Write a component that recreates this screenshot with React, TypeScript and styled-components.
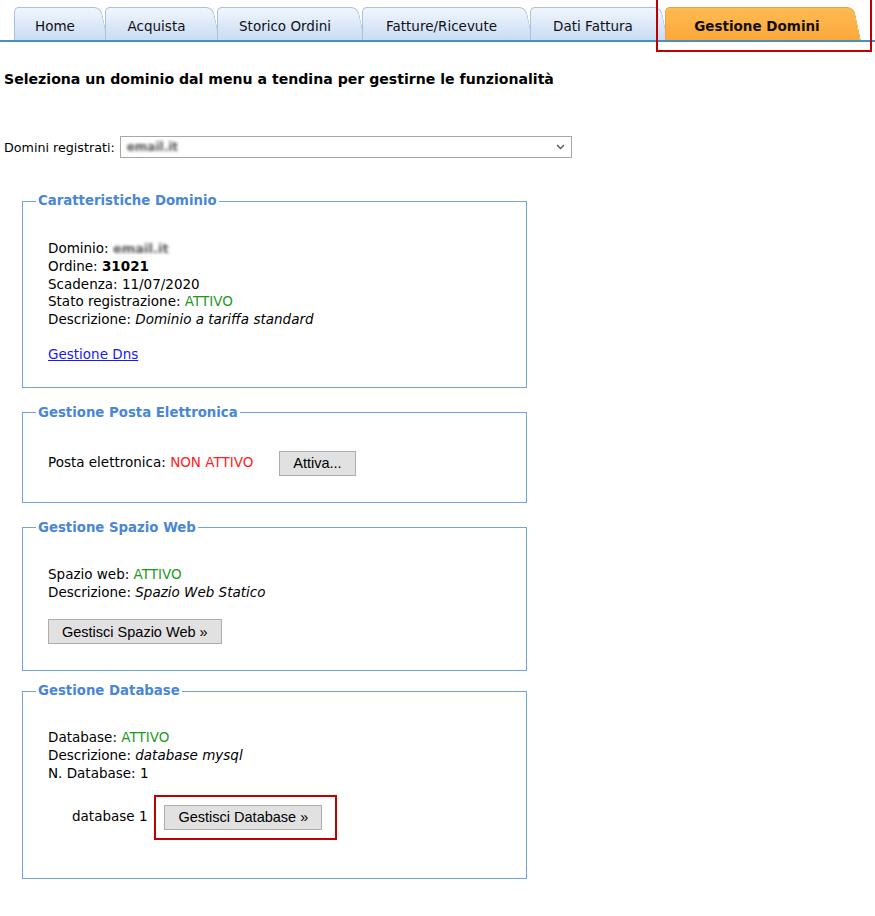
import React from 'react';
import styled, { createGlobalStyle } from 'styled-components';

const GlobalStyle = createGlobalStyle`
  body {
    margin: 0;
    background: #fff;
    color: #000;
    font-family: "DejaVu Sans", Verdana, sans-serif;
  }
`;

const Page = styled.div`
  position: relative;
  width: 875px;
  height: 916px;
  overflow: hidden;
`;

const TabBar = styled.div`
  display: flex;
  align-items: flex-end;
  height: 40px;
  padding-left: 14px;
  border-bottom: 2px solid #4690c2;
`;

const Tab = styled.div<{ $w: number; $active?: boolean }>`
  position: relative;
  z-index: 0;
  flex: none;
  width: ${p => p.$w}px;
  height: 33px;
  box-sizing: border-box;
  padding: 4px 9px 0 0;
  display: flex;
  align-items: center;
  justify-content: center;
  font-size: 13.5px;
  font-weight: ${p => (p.$active ? 'bold' : 'normal')};
  color: #111;

  &::before,
  &::after {
    content: '';
    position: absolute;
    top: 0;
    bottom: 0;
    z-index: -1;
    background: ${p =>
      p.$active
        ? 'linear-gradient(#ffbb52, #fba73a)'
        : 'linear-gradient(#f1f6fd, #c9dcf4)'};
    border: 1px solid ${p => (p.$active ? '#eaa444' : '#a9c1de')};
    border-bottom: none;
  }

  &::before {
    left: 0;
    right: 10px;
    border-right: none;
    border-radius: 5px 0 0 0;
  }

  &::after {
    right: 4px;
    width: 16px;
    border-left: none;
    border-radius: 0 7px 0 0;
    transform: skewX(12deg);
    transform-origin: top;
  }
`;

const Annotation = styled.div`
  position: absolute;
  left: 656px;
  top: -4px;
  width: 216px;
  height: 56px;
  box-sizing: border-box;
  border: 2px solid #c00000;
  pointer-events: none;
`;

const Content = styled.div`
  padding-left: 4px;
`;

const Heading = styled.h1`
  margin: 28px 0 0;
  font-size: 14.1px;
  line-height: 18px;
  font-weight: bold;
`;

const SelectRow = styled.div`
  display: flex;
  align-items: center;
  margin-top: 48px;
  gap: 5px;
  font-size: 12.7px;
`;

const SelectBox = styled.div`
  width: 452px;
  height: 22px;
  box-sizing: border-box;
  border: 1px solid #a8a8a8;
  display: flex;
  align-items: center;
  justify-content: space-between;
  padding: 0 6px 0 6px;
`;

const Blurred = styled.span<{ $size?: number }>`
  display: inline-block;
  line-height: 1;
  vertical-align: baseline;
  color: #555;
  font-weight: bold;
  font-size: ${p => p.$size ?? 13}px;
  filter: blur(1.4px);
`;

const Fieldset = styled.fieldset<{ $mt: number }>`
  margin: ${p => p.$mt}px 0 0 18px;
  width: 505px;
  box-sizing: border-box;
  padding: 0;
  border: 1px solid #6fa3e5;
  min-inline-size: 0;
`;

const Legend = styled.legend`
  margin-left: 13px;
  padding: 0 2px;
  font-size: 13.3px;
  line-height: 16px;
  font-weight: bold;
  color: #4a86d6;
`;

const Body = styled.div<{ $pt: number; $pb: number }>`
  padding: ${p => p.$pt}px 0 ${p => p.$pb}px 25px;
  font-size: 13.5px;
  line-height: 17.8px;
`;

const Line = styled.div`
  height: 17.8px;
`;

const Status = styled.span<{ $on: boolean }>`
  color: ${p => (p.$on ? '#1d9a1d' : '#ff2222')};
`;

const Italic = styled.em`
  font-style: italic;
`;

const Link = styled.a`
  display: inline-block;
  margin-top: 17px;
  color: #1a1aee;
  text-decoration: underline;
  cursor: pointer;
`;

const Inline = styled.div`
  display: flex;
  align-items: center;
`;

const Button = styled.button<{ $ml?: number; $mt?: number }>`
  height: 25px;
  margin: ${p => p.$mt ?? 0}px 0 0 ${p => p.$ml ?? 0}px;
  padding: 0 13px;
  background: #e1e1e1;
  border: 1px solid #adadad;
  border-radius: 0;
  font-family: "Liberation Sans", Arial, sans-serif;
  font-size: 14.5px;
  color: #000;
  cursor: pointer;
`;

const DbRow = styled.div`
  display: flex;
  align-items: center;
  margin: 12px 0 0 24px;
`;

const Highlight = styled.div`
  margin-left: 7px;
  padding: 8px 13px 8px 8px;
  border: 2px solid #c00000;
`;

const tabs = [
  { label: 'Home', w: 91 },
  { label: 'Acquista', w: 112 },
  { label: 'Storico Ordini', w: 145 },
  { label: 'Fatture/Ricevute', w: 168 },
  { label: 'Dati Fattura', w: 135 },
  { label: 'Gestione Domini', w: 193, active: true },
];

export default function App() {
  return (
    <Page>
      <GlobalStyle />
      <TabBar>
        {tabs.map(t => (
          <Tab key={t.label} $w={t.w} $active={t.active}>
            {t.label}
          </Tab>
        ))}
      </TabBar>
      <Annotation />
      <Content>
        <Heading>Seleziona un dominio dal menu a tendina per gestirne le funzionalità</Heading>
        <SelectRow>
          <span>Domini registrati:</span>
          <SelectBox>
            <Blurred $size={12}>email.it</Blurred>
            <svg width="9" height="6" viewBox="0 0 9 6">
              <path d="M1 1l3.5 3.5L8 1" fill="none" stroke="#555" strokeWidth="1.3" />
            </svg>
          </SelectBox>
        </SelectRow>

        <Fieldset $mt={35}>
          <Legend>Caratteristiche Dominio</Legend>
          <Body $pt={31} $pb={23}>
            <Line>
              Dominio: <Blurred>email.it</Blurred>
            </Line>
            <Line>
              Ordine: <b>31021</b>
            </Line>
            <Line>Scadenza: 11/07/2020</Line>
            <Line>
              Stato registrazione: <Status $on>ATTIVO</Status>
            </Line>
            <Line>
              Descrizione: <Italic>Dominio a tariffa standard</Italic>
            </Line>
            <Link>Gestione Dns</Link>
          </Body>
        </Fieldset>

        <Fieldset $mt={17}>
          <Legend>Gestione Posta Elettronica</Legend>
          <Body $pt={30} $pb={26}>
            <Inline>
              <span>
                Posta elettronica: <Status $on={false}>NON ATTIVO</Status>
              </span>
              <Button $ml={26}>Attiva...</Button>
            </Inline>
          </Body>
        </Fieldset>

        <Fieldset $mt={17}>
          <Legend>Gestione Spazio Web</Legend>
          <Body $pt={30} $pb={26}>
            <Line>
              Spazio web: <Status $on>ATTIVO</Status>
            </Line>
            <Line>
              Descrizione: <Italic>Spazio Web Statico</Italic>
            </Line>
            <Button $mt={18}>Gestisci Spazio Web »</Button>
          </Body>
        </Fieldset>

        <Fieldset $mt={12}>
          <Legend>Gestione Database</Legend>
          <Body $pt={30} $pb={38}>
            <Line>
              Database: <Status $on>ATTIVO</Status>
            </Line>
            <Line>
              Descrizione: <Italic>database mysql</Italic>
            </Line>
            <Line>N. Database: 1</Line>
            <DbRow>
              <span>database 1</span>
              <Highlight>
                <Button>Gestisci Database »</Button>
              </Highlight>
            </DbRow>
          </Body>
        </Fieldset>
      </Content>
    </Page>
  );
}
